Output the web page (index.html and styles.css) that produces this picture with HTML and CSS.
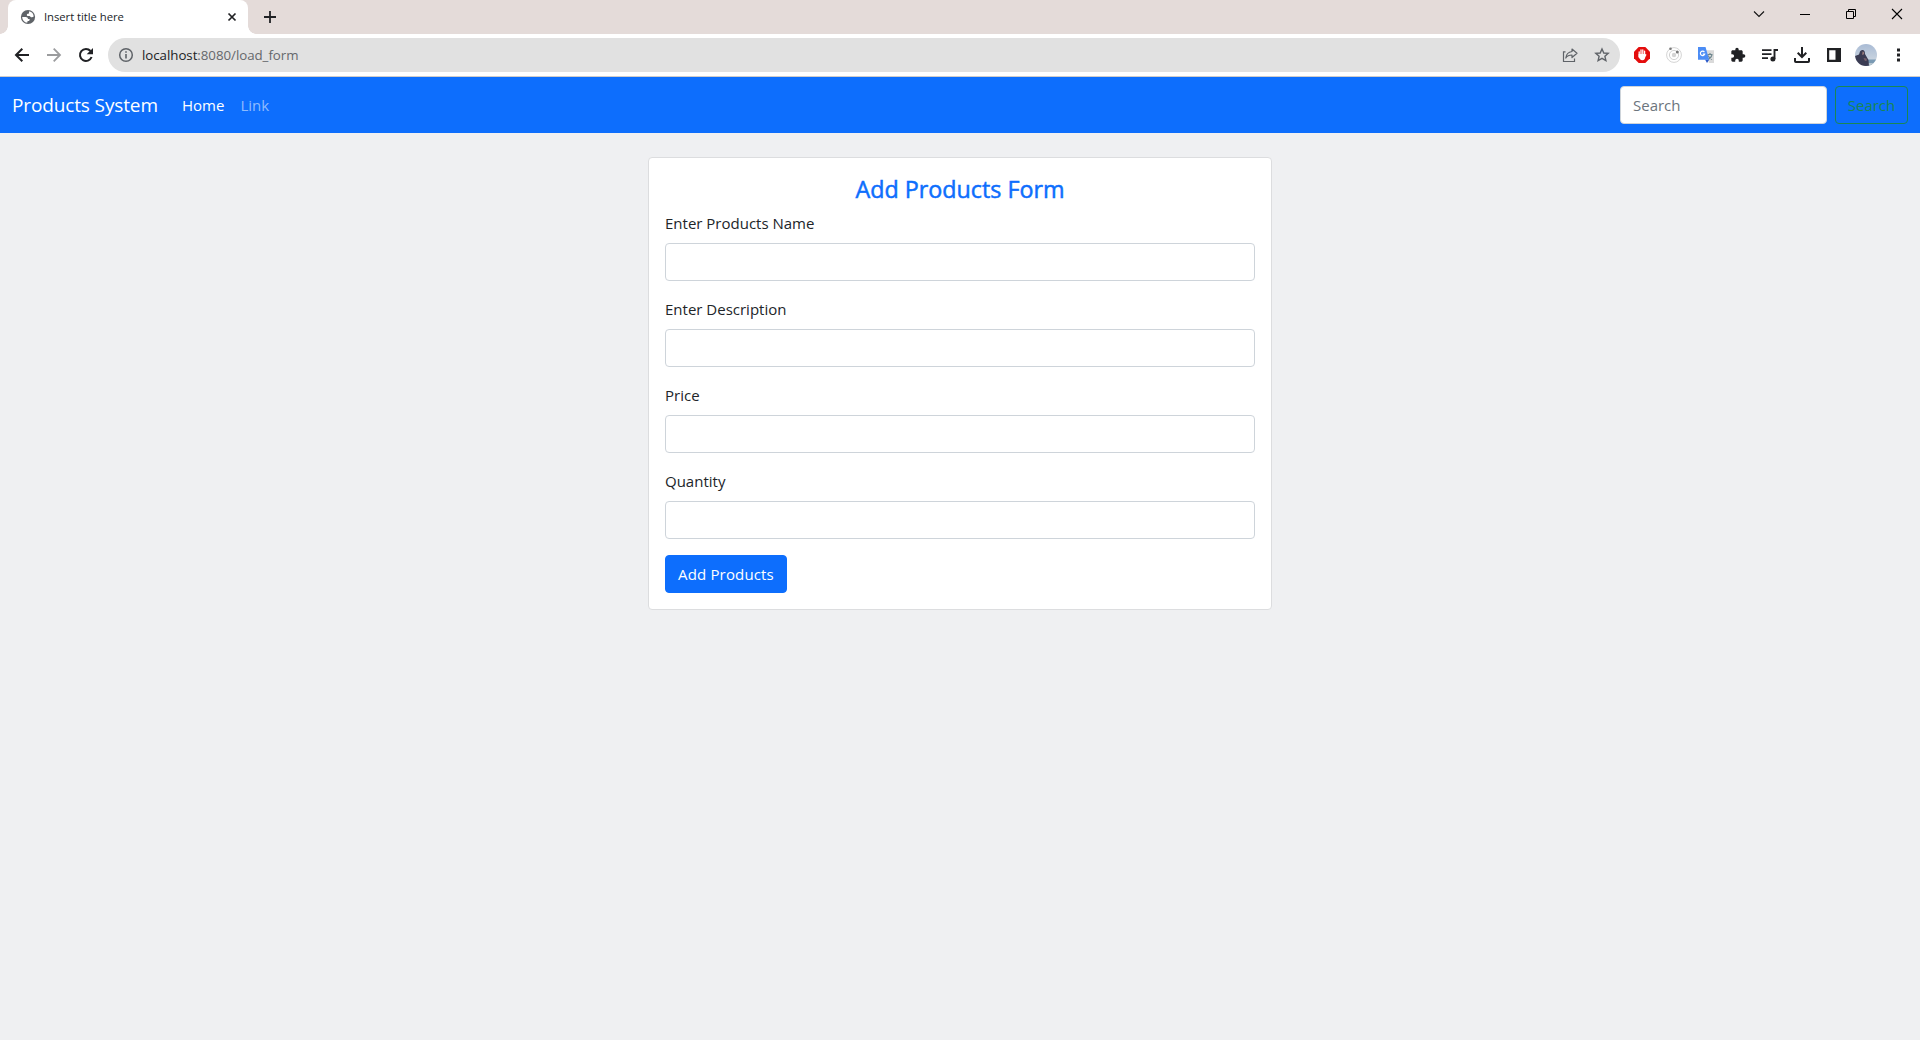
FILE: index.html
```html
<!DOCTYPE html>
<html lang="en">
<head>
<meta charset="utf-8">
<title>Insert title here</title>
<link rel="stylesheet" href="styles.css">
</head>
<body>
<header class="browser">
  <div class="tabstrip">
    <div class="tab">
      <svg class="tab-favicon" viewBox="0 0 16 16"><circle cx="8" cy="8" r="7.100" fill="#5f6368"/><path d="M9.200 2.300C12 2.700 13.600 5 13.700 7.600c-.9.900-2.500.9-3.300.1-.5-.6-1.100-.7-2-.7-1.200 0-1.800-.5-1.500-1.500.2-.7.900-.6 1.500-.7.800-.2.500-1.400.8-2.500zM2.200 8h3.500c1.400 0 2.300.9 2.300 2h1.600c.3 1.200-.3 2-1.500 2.100-.7.100-.8.800-.8 1.700C4.300 13.400 2.200 11 2.200 8z" fill="#fff"/></svg>
      <span class="tab-title">Insert title here</span>
      <svg class="tab-close" viewBox="0 0 10 10"><path d="M1.500 1.500l7 7M8.500 1.500l-7 7" stroke="#202124" stroke-width="1.700"/></svg>
    </div>
    <svg class="new-tab" viewBox="0 0 12 12"><path d="M6 0v12M0 6h12" stroke="#202124" stroke-width="1.800"/></svg>
    <div class="window-controls">
      <span class="control"><svg viewBox="0 0 12 12"><path d="M1 3.500l5 5 5-5" fill="none" stroke="#111" stroke-width="1.100"/></svg></span>
      <span class="control"><svg viewBox="0 0 12 12"><path d="M1 6.500h10" stroke="#000"/></svg></span>
      <span class="control"><svg viewBox="0 0 12 12"><path d="M1.500 3.500h7v7h-7zM3.500 3.500v-2h7v7h-2" fill="none" stroke="#000"/></svg></span>
      <span class="control"><svg viewBox="0 0 12 12"><path d="M1 1l10 10M11 1L1 11" stroke="#000" stroke-width="1.100"/></svg></span>
    </div>
  </div>
  <div class="toolbar">
    <span class="tool"><svg viewBox="0 0 16 16"><path d="M15 8H2M8.300 1.700L2 8l6.300 6.300" fill="none" stroke="#202124" stroke-width="2"/></svg></span>
    <span class="tool"><svg viewBox="0 0 16 16"><path d="M1 8h13M7.700 1.700L14 8l-6.300 6.300" fill="none" stroke="#9b9c9e" stroke-width="1.800"/></svg></span>
    <span class="tool"><svg viewBox="0 0 16 16"><path d="M13.600 10A6 6 0 1 1 12.500 4" fill="none" stroke="#202124" stroke-width="2"/><path d="M15 1v6.300H8.700z" fill="#202124"/></svg></span>
    <div class="omnibox">
      <svg class="info" viewBox="0 0 16 16"><circle cx="8" cy="8" r="6.300" fill="none" stroke="#5f6368" stroke-width="1.500"/><path d="M8 7v4.500M8 4.200v1.600" stroke="#5f6368" stroke-width="1.600"/></svg>
      <span class="url"><span class="url-host">localhost</span>:8080/load_form</span>
      <span class="tool tool-first"><svg viewBox="0 0 16 16"><path d="M3.500 4.800h-2v9.700h11V11.500" fill="none" stroke="#5f6368" stroke-width="1.200"/><path d="M10 2l5 4.300-5 4.200V8C7 8 5 9 3.800 11 4.200 7.500 6.300 5 10 4.500z" fill="none" stroke="#5f6368" stroke-width="1.200" stroke-linejoin="round"/></svg></span>
      <span class="tool"><svg viewBox="0 0 16 16"><path d="M8 2l1.800 4 4.400.4-3.300 2.900 1 4.300L8 11.300l-3.900 2.300 1-4.300L1.800 6.400 6.200 6z" fill="none" stroke="#5f6368" stroke-width="1.400"/></svg></span>
    </div>
    <span class="tool tool-extension"><svg viewBox="0 0 16 16"><path d="M4.700 0h6.600L16 4.700v6.600L11.300 16H4.700L0 11.300V4.700z" fill="#e40d0d"/><path d="M5.200 10V4.800M7 8V3M8.800 8V3M10.600 8V4.200" stroke="#fff" stroke-width="1.300" stroke-linecap="round"/><path d="M4.600 7h6.700v2.800c0 1.800-1 3.500-2.900 3.500-2 0-2.900-1.200-3.800-3.500z" fill="#fff"/><path d="M10.200 10.200l1.500-2.400" stroke="#fff" stroke-width="1.500" stroke-linecap="round"/></svg></span>
    <span class="tool"><svg viewBox="0 0 16 16"><circle cx="8" cy="8" r="7.400" fill="#fff" stroke="#cfcfcf" stroke-width=".9"/><circle cx="8" cy="8" r="4.600" fill="none" stroke="#d2d2d2"/><circle cx="8" cy="8" r="2.200" fill="#d4d4d4"/><circle cx="4.500" cy="1.700" r="1.300" fill="#777"/><circle cx="11.300" cy="5" r="1.500" fill="#777"/></svg></span>
    <span class="tool"><svg viewBox="0 0 16 16"><path d="M7 3.200h9V16h-5z" fill="#dadada"/><path d="M9.500 7.500h5M12 6v1.500M14 8c-.5 2-2 3.500-4 4.500M10 8.500c1 2 2.300 3.300 4 4" fill="none" stroke="#6c858d" stroke-width="1.100"/><path d="M7 12.500h4.300L9 16z" fill="#2858ca"/><path d="M0 0h7.500l3.700 12.700H0z" fill="#4b8cf5"/><path d="M6.400 5.100A2.200 2.200 0 1 0 6.700 7H4.700" fill="none" stroke="#fff" stroke-width="1.200"/></svg></span>
    <span class="tool"><svg viewBox="0 0 24 24"><path d="M20.500 11H19V7c0-1.100-.9-2-2-2h-4V3.500a2.500 2.500 0 0 0-5 0V5H4c-1.100 0-2 .9-2 2v3.800h1.500a2.700 2.700 0 0 1 0 5.400H2V20c0 1.100.9 2 2 2h3.800v-1.500a2.700 2.700 0 0 1 5.400 0V22H17c1.100 0 2-.9 2-2v-4h1.500a2.500 2.500 0 0 0 0-5z" fill="#202124"/></svg></span>
    <span class="tool"><svg viewBox="0 0 16 16"><path d="M0 3.200h9.500M0 7.200h9.500M0 11.200h6" stroke="#202124" stroke-width="1.800"/><path d="M12.500 12V3h3.500" fill="none" stroke="#202124" stroke-width="1.900"/><circle cx="10.900" cy="12" r="2.500" fill="#202124"/></svg></span>
    <span class="tool"><svg viewBox="0 0 16 16"><path d="M8 0v9.500M3.700 5.800L8 10l4.300-4.200M1 11v3.200q0 .8.800.8h12.400q.8 0 .8-.8V11" fill="none" stroke="#202124" stroke-width="2"/></svg></span>
    <span class="tool"><svg viewBox="0 0 16 16"><path d="M1 1h14v14H1zM3.200 3.200v9.600h6.300V3.200z" fill="#202124" fill-rule="evenodd"/></svg></span>
    <span class="tool"><svg class="avatar" viewBox="0 0 22 22"><defs><clipPath id="face"><circle cx="11" cy="11" r="11"/></clipPath><linearGradient id="sky" x1="0" y1="0" x2="0" y2="1"><stop offset="0" stop-color="#a9bbd5"/><stop offset=".7" stop-color="#c8d3df"/></linearGradient></defs><g clip-path="url(#face)"><path d="M0 0h22v22H0z" fill="url(#sky)"/><path d="M9 15.500h13V22H9z" fill="#7999b3"/><path d="M9 19h13v3H9z" fill="#b7c5ce"/><path d="M0 12l4-1.500L5 7.500Q6 5.500 8 6q2 .5 2 4l3.500 6 .5 6H1z" fill="#3b3c53"/><path d="M7.500 7.600q2 0 1.500 2.700l-1.800.7z" fill="#9a7c7d"/><path d="M8.500 14l3 .5.500 2-2 .5z" fill="#76616d"/></g></svg></span>
    <span class="tool"><svg viewBox="0 0 16 16"><path d="M7 1.500h3v3H7zM7 6.500h3v3H7zM7 11.500h3v3H7z" fill="#202124"/></svg></span>
  </div>
</header>

<nav class="navbar">
  <a class="brand">Products System</a>
  <a class="nav-link active">Home</a>
  <a class="nav-link">Link</a>
  <form class="search">
    <input class="field search-field" type="search" placeholder="Search">
    <button class="btn btn-outline" type="button">Search</button>
  </form>
</nav>

<main class="page">
  <form class="card">
    <h1 class="card-title">Add Products Form</h1>
    <div class="group"><label class="label" for="name">Enter Products Name</label><input class="field" id="name"></div>
    <div class="group"><label class="label" for="description">Enter Description</label><input class="field" id="description"></div>
    <div class="group"><label class="label" for="price">Price</label><input class="field" id="price"></div>
    <div class="group"><label class="label" for="quantity">Quantity</label><input class="field" id="quantity"></div>
    <button class="btn btn-primary" type="button">Add Products</button>
  </form>
</main>
</body>
</html>
```
FILE: styles.css
```css
*, *::before, *::after { box-sizing: border-box; }

body {
  margin: 0;
  min-height: 1040px;
  display: flex;
  flex-direction: column;
  background: #eff0f2;
  color: #212529;
  font-family: "Segoe UI", "Open Sans", "Noto Sans", sans-serif;
  font-size: 15px;
  line-height: 24px;
}

svg { display: block; flex: none; }

/* Browser window */
.browser { background: #fff; border-bottom: 1px solid #d0ccc9; }

.tabstrip {
  display: flex;
  height: 34px;
  padding-left: 8px;
  background: #e4dbd9;
}

.tab {
  position: relative;
  display: flex;
  align-items: center;
  width: 240px;
  padding: 0 11px 0 12px;
  background: #fff;
  border-radius: 8px 8px 0 0;
}
.tab::before, .tab::after {
  content: "";
  position: absolute;
  bottom: 0;
  width: 8px;
  height: 8px;
}
.tab::before { left: -8px; background: radial-gradient(circle at 0 0, transparent 7.5px, #fff 8px); }
.tab::after { right: -8px; background: radial-gradient(circle at 100% 0, transparent 7.5px, #fff 8px); }

.tab-favicon { width: 16px; height: 16px; }
.tab-title { margin-left: 8px; font-size: 11.3px; letter-spacing: -0.05px; }
.tab-close { width: 10px; height: 10px; margin-left: auto; }
.new-tab { width: 12px; height: 12px; margin: 11px 0 0 16px; }

.window-controls { display: flex; margin-left: auto; }
.control { display: flex; justify-content: center; width: 46px; padding-top: 8px; }
.control svg { width: 12px; height: 12px; }

.toolbar { display: flex; align-items: center; height: 42px; padding: 0 6px; }
.tool { display: flex; justify-content: center; flex: none; width: 32px; }
.tool svg { width: 16px; height: 16px; }
.tool svg.avatar { width: 22px; height: 22px; }
.tool-first { margin-left: auto; }
.tool-extension { margin-left: 6px; }

.omnibox {
  display: flex;
  align-items: center;
  flex: 1;
  height: 34px;
  margin-left: 6px;
  padding: 0 2px 0 10px;
  border-radius: 17px;
  background: #e1e1e1;
}
.info { width: 16px; height: 16px; }
.url { margin-left: 8px; color: #65686c; font-size: 13.3px; letter-spacing: -0.04px; }
.url-host { color: #202124; }

/* Site navigation */
.navbar {
  display: flex;
  align-items: center;
  height: 56px;
  padding: 0 12px;
  background: #0d6efd;
  color: #fff;
}
.brand { width: 146px; margin-right: 16px; font-size: 19px; line-height: 30px; letter-spacing: -0.13px; white-space: nowrap; }
.nav-link { padding: 0 8px; color: rgba(255, 255, 255, 0.55); }
.nav-link.active { color: #fff; }
.search { display: flex; gap: 8px; margin-left: auto; }

/* Controls */
.field {
  display: block;
  width: 100%;
  height: 38px;
  padding: 6px 12px;
  border: 1px solid #ced4da;
  border-radius: 4px;
  background: #fff;
  color: #212529;
  font: inherit;
}
.field::placeholder { color: #6c757d; opacity: 1; }
.search-field { width: 207px; }

.btn {
  height: 38px;
  padding: 0;
  border: 1px solid;
  border-radius: 4px;
  font: inherit;
}
.btn-outline { width: 73px; border-color: #198754; background: transparent; color: #198754; }
.btn-primary { width: 122px; border-color: #0d6efd; background: #0d6efd; color: #fff; letter-spacing: 0.15px; }

/* Product form */
.page { display: flex; justify-content: center; padding: 24px; }
.card {
  width: 624px;
  padding: 16px;
  border: 1px solid #dcdddf;
  border-radius: 4px;
  background: #fff;
}
.card-title {
  margin: 0 0 7px;
  padding-top: 1px;
  color: #0d6efd;
  font-size: 23.3px;
  font-weight: 500;
  line-height: 29px;
  text-align: center;
  -webkit-text-stroke: 0.5px #0d6efd;
}
.group { margin-bottom: 16px; }
.label { display: block; width: max-content; margin-bottom: 8px; }
```
